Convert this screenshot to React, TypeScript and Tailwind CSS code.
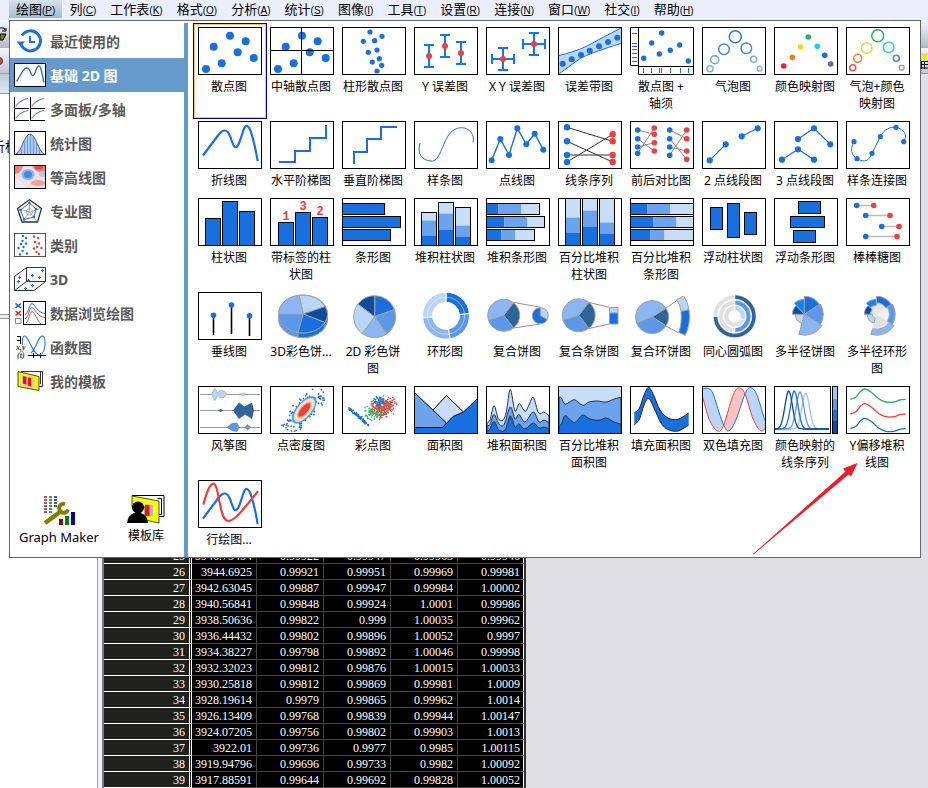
import React from 'react';

type Pt = [number, number];

const BLUE = '#1a6fdf';
const MID = '#6ba3ec';
const PALE = '#c8ddf8';
const RED = '#f03e3e';
const NAVY = '#104a98';
const STEEL = '#2f6499';
const SKY = '#5c97ea';
const SOFT = '#8bb6f1';
const ICE = '#bbd5f7';
const GREEN = '#2fae68';
const GREY = '#9ca3ab';

/* ---------- geometry helpers ---------- */

function smooth(p: Pt[], join = false): string {
  let d = `${join ? 'L' : 'M'}${p[0][0]} ${p[0][1]}`;
  for (let i = 0; i < p.length - 1; i++) {
    const a = p[Math.max(0, i - 1)];
    const b = p[i];
    const c = p[i + 1];
    const e = p[Math.min(p.length - 1, i + 2)];
    d += `C${b[0] + (c[0] - a[0]) / 6} ${b[1] + (c[1] - a[1]) / 6} ${c[0] - (e[0] - b[0]) / 6} ${c[1] - (e[1] - b[1]) / 6} ${c[0]} ${c[1]}`;
  }
  return d;
}

const between = (a: Pt[], b: Pt[]) => smooth(a) + smooth([...b].reverse(), true) + 'Z';

function wedge(cx: number, cy: number, r: number, from: number, to: number, inner = 0): string {
  const at = (rad: number, deg: number) => {
    const t = (deg * Math.PI) / 180;
    return `${(cx + rad * Math.sin(t)).toFixed(2)} ${(cy - rad * Math.cos(t)).toFixed(2)}`;
  };
  const big = to - from > 180 ? 1 : 0;
  if (!inner) return `M${cx} ${cy}L${at(r, from)}A${r} ${r} 0 ${big} 1 ${at(r, to)}Z`;
  return `M${at(r, from)}A${r} ${r} 0 ${big} 1 ${at(r, to)}L${at(inner, to)}A${inner} ${inner} 0 ${big} 0 ${at(inner, from)}Z`;
}

function cloud(n: number, cx: number, cy: number, sx: number, sy: number, deg: number, seed: number): Pt[] {
  let s = seed * 7919 + 104729;
  const rnd = () => {
    s = (s * 16807) % 2147483647;
    return s / 2147483647;
  };
  const t = (deg * Math.PI) / 180;
  const out: Pt[] = [];
  for (let i = 0; i < n; i++) {
    const u = (rnd() + rnd() + rnd() - 1.5) * 2 * sx;
    const v = (rnd() + rnd() + rnd() - 1.5) * 2 * sy;
    out.push([cx + u * Math.cos(t) - v * Math.sin(t), cy + u * Math.sin(t) + v * Math.cos(t)]);
  }
  return out;
}

/* ---------- drawing parts ---------- */

const Frame = () => <rect x=".5" y=".5" width="63" height="47" fill="none" stroke="#000" />;

const Dots = ({ p, r = 3, fill = BLUE }: { p: Pt[]; r?: number; fill?: string }) => (
  <g fill={fill}>
    {p.map(([x, y], i) => (
      <circle key={i} cx={x} cy={y} r={r} />
    ))}
  </g>
);

const Curve = ({ p, c = BLUE, w = 1 }: { p: Pt[]; c?: string; w?: number }) => (
  <path d={smooth(p)} fill="none" stroke={c} strokeWidth={w} />
);

const Poly = ({ p, c = BLUE, w = 1 }: { p: Pt[]; c?: string; w?: number }) => (
  <polyline points={p.join(' ')} fill="none" stroke={c} strokeWidth={w} />
);

type Box = [number, number, number, number, string?];
const Boxes = ({ b, stroke = '#000' }: { b: Box[]; stroke?: string }) => (
  <g stroke={stroke}>
    {b.map(([x0, y0, x1, y1, f], i) => (
      <rect key={i} x={x0 + 0.5} y={y0 + 0.5} width={x1 - x0 - 1} height={y1 - y0 - 1} fill={f ?? BLUE} />
    ))}
  </g>
);

type Slice = [number, number, number, string, number?];
const Slices = ({ cx, cy, s, stroke = GREY, w = 1 }: { cx: number; cy: number; s: Slice[]; stroke?: string; w?: number }) => (
  <g stroke={stroke} strokeWidth={w}>
    {s.map(([r, a, b, f, inner], i) => (
      <path key={i} d={wedge(cx, cy, r, a, b, inner)} fill={f} />
    ))}
  </g>
);

const Rings = ({ p }: { p: [number, number, number, string][] }) => (
  <g fill="none" strokeWidth="1.5">
    {p.map(([x, y, r, c], i) => (
      <circle key={i} cx={x} cy={y} r={r} stroke={c} />
    ))}
  </g>
);

const scatter: Pt[] = [[8, 42], [15.7, 19.7], [23.7, 36.3], [32, 8.7], [39.7, 25.3], [47.7, 14.3], [55.7, 31]];
const linePath = 'M5 34.5L20 14.5C25 8 29 7.500 32 15L34.500 22Q37.700 31 41.500 21L45.500 9Q49 0 53 11Q57 24 59.700 40';
const zigzag: Pt[] = [[5.7, 39.3], [14.3, 18], [23, 34], [31.3, 7.3], [40.3, 23.3], [48.7, 12.7], [57.3, 28.7]];

const blueWave: Pt[] = [[1, 3], [5.7, 2.3], [10.7, 7], [17.3, 27], [21.7, 39], [26.7, 45], [34, 33.7], [43, 8], [48, 1.7], [54, 7], [60.7, 27], [63, 35]];
const redWave: Pt[] = [[1, 12], [7.3, 33.7], [15.7, 45], [21.7, 39], [30.7, 10.3], [36.7, 2], [43, 8], [50.7, 32], [58, 44.3], [63, 43]];

const stackTop: Pt[] = [[1, 37], [4, 34], [8, 19.7], [12.3, 32.7], [17, 34], [20.5, 25], [24.3, 3.5], [29, 25], [33.3, 17.7], [39, 25.3], [43, 19], [47.3, 11.5], [52.7, 27], [58, 26], [63, 30]];
const stackMid: Pt[] = [[1, 40], [4, 38.5], [8, 28.5], [13, 38], [18, 38.5], [24.3, 21], [29, 33], [33, 28.5], [39, 36], [47.3, 26], [53, 36], [58, 34], [63, 37]];
const stackLow: Pt[] = [[1, 45], [4, 43], [8, 35.5], [13, 44], [19, 44], [24.3, 30], [29, 41], [33, 38], [39, 43], [47.3, 37], [53, 42], [58, 41], [63, 43]];
const pctTop: Pt[] = [[1, 11], [3.5, 12], [7.3, 18.3], [16.3, 13.7], [24.7, 19.3], [31, 16], [39, 15], [48, 16], [56.3, 13], [63, 11.3]];
const pctLow: Pt[] = [[1, 40.5], [3.5, 38], [7.3, 29.7], [16.3, 36.5], [24.7, 29], [31.3, 32.7], [41, 34.3], [48, 32], [56, 36], [63, 38]];
const fillTop: Pt[] = [[4.3, 27], [9.5, 22], [14, 9], [18.7, 1.5], [24, 10], [30, 24], [38, 32], [48, 33.3], [58.7, 27]];
const fillLow: Pt[] = [[4.3, 39], [9.5, 33], [14, 19], [18.7, 12.5], [24, 22], [31, 37], [38, 43.5], [48, 45], [58.7, 39]];
const offset: Pt[] = [[4.3, 13.3], [10, 11], [14.5, 5.5], [18.7, 3], [25, 6], [33, 13], [40, 16], [48, 16], [54, 14], [59.7, 13.3]];

const shift = (p: Pt[], dy: number): Pt[] => p.map(([x, y]) => [x, y + dy]);
const bell = (m: number, top: number): Pt[] => {
  const out: Pt[] = [];
  for (let x = 1; x <= 56; x += 1.5) out.push([x, 43 - (43 - top) * Math.exp(-((x - m) ** 2) / 28)]);
  return out;
};

const ErrorBars = ({ v, h = [] }: { v: Pt[]; h?: Pt[] }) => (
  <g stroke="#1378ea" strokeWidth="2" fill="none">
    {v.map(([x, y], i) => (
      <path key={i} d={`M${x} ${y - 11}V${y + 11}M${x - 5} ${y - 11}h10M${x - 5} ${y + 11}h10`} />
    ))}
    {h.map(([x, y], i) => (
      <path key={i} d={`M${x - 11} ${y}H${x + 11}M${x - 11} ${y - 5}v10M${x + 11} ${y - 5}v10`} />
    ))}
    {v.map(([x, y], i) => (
      <circle key={i} cx={x} cy={y} r="3" fill={RED} stroke="none" />
    ))}
  </g>
);

const Links = ({ x0, x1, pairs, r }: { x0: number; x1: number; pairs: Pt[]; r: number }) => (
  <g>
    {pairs.map(([a, b], i) => (
      <path key={i} d={`M${x0} ${a}L${x1} ${b}`} stroke={r > 3 ? '#333' : '#888'} />
    ))}
    <Dots r={r} p={pairs.map(([a]) => [x0, a] as Pt)} />
    <Dots r={r} fill={RED} p={pairs.map(([, b]) => [x1, b] as Pt)} />
  </g>
);

/* ---------- gallery ---------- */

type Plot = { name: string[]; art: React.ReactNode; bare?: boolean };

const plots: Plot[] = [
  { name: ['散点图'], art: <Dots p={scatter} r={4} /> },
  { name: ['中轴散点图'], art: <><Dots p={scatter} r={4} /><path d="M31.500 0V48M0 23.500H64" stroke="#000" /></> },
  { name: ['柱形散点图'], art: <Dots r={2.6} p={[[28, 5], [40, 9.3], [21.3, 14.3], [32.7, 13.7], [35, 23], [26.3, 25.3], [37.3, 31.7], [30.3, 35], [39.7, 38.3], [35, 44]]} /> },
  { name: ['Y 误差图'], art: <ErrorBars v={[[15, 29], [31, 19], [47, 26]]} /> },
  { name: ['X Y 误差图'], art: <ErrorBars v={[[17, 32], [48, 17]]} h={[[17, 32], [48, 17]]} /> },
  {
    name: ['误差带图'],
    art: (
      <>
        <path d="M1 28.500C20 24 30 19 40 13L63 1V16.500C45 22 34 26 25 30C15 36 8 42 1 47Z" fill="#bcd6f8" />
        <path d="M1 28.500C20 24 30 19 40 13L63 1M63 16.500C45 22 34 26 25 30C15 36 8 42 1 47" fill="none" stroke={BLUE} />
        <Dots r={3} p={[[4.7, 36.7], [13.7, 32.3], [23, 28], [31.7, 23.7], [41, 19.3], [50, 15], [59.3, 10.7]]} />
      </>
    ),
  },
  {
    name: ['散点图 +', '轴须'],
    bare: true,
    art: (
      <>
        <path d="M.500 .500H63.500V47.500H8.500V.500M.500 .500V38.500M.500 38.500H8.500M8.500 39.500H63.500" fill="none" stroke="#000" />
        <path d="M2 6.500h5M2 16.500h5M2 19.500h5M2 22.500h5M2 26.500h5M2 30.500h5M2 34.500h5M13.500 41v5M21.500 41v5M29.500 41v5M31.500 41v5M40.500 41v5M50.500 41v5M58.500 41v5" stroke={BLUE} />
        <Dots r={2.7} p={[[31.7, 6], [21.7, 16], [49.7, 18], [40.3, 23.3], [29.3, 27], [13.7, 31.3], [58.3, 34]]} />
      </>
    ),
  },
  { name: ['气泡图'], art: <Rings p={[[33.3, 9.7, 6, '#2a76df'], [22, 22.3, 5.3, '#4386e4'], [44.3, 21.3, 5.3, '#4386e4'], [12.7, 32.7, 4, '#6ba3ec'], [51.7, 32.3, 3, '#7eb0f0'], [8, 41.7, 3, '#7eb0f0'], [57.7, 41.7, 2.4, '#8bb6f1']]} /> },
  {
    name: ['颜色映射图'],
    art: (
      <>
        {([[9.7, 39, '#ee2028'], [18.3, 30.3, '#ff7a10'], [26.7, 20, '#e6dc1a'], [34.3, 10, GREEN], [43.3, 19.3, '#18d4dc'], [50.7, 28.3, BLUE], [56.7, 37, '#6c62bd']] as [number, number, string][]).map(([x, y, c]) => (
          <circle key={c} cx={x} cy={y} r="2.800" fill={c} />
        ))}
      </>
    ),
  },
  { name: ['气泡+颜色', '映射图'], art: <Rings p={[[31.7, 8.7, 6, GREEN], [20.7, 21, 5.3, '#e6dc30'], [42.7, 20.3, 5.3, '#28d4dc'], [11.7, 31.3, 4, '#ff7a28'], [50.3, 31.3, 3, '#4a8ae6'], [6.7, 40.7, 3, '#ee5058'], [55.7, 40.7, 2.4, '#a898d8']]} /> },

  { name: ['折线图'], art: <path d={linePath} fill="none" stroke={BLUE} strokeWidth="2.200" /> },
  { name: ['水平阶梯图'], art: <Poly w={2} p={[[9, 41], [25, 41], [25, 30], [40, 30], [40, 17], [56, 17], [56, 4]]} /> },
  { name: ['垂直阶梯图'], art: <Poly w={2} p={[[12, 43], [12, 31], [25, 31], [25, 18], [39, 18], [39, 6], [55, 6]]} /> },
  { name: ['样条图'], art: <path d="M6 22C3 33 8 39.500 17 40C25 41 27 27 34 15C38 9 42 7 47.500 6.700C56 7 61 14 59 21.300" fill="none" stroke={BLUE} /> },
  { name: ['点线图'], art: <><Poly w={1.4} p={zigzag} /><Dots p={zigzag} r={3} /></> },
  { name: ['线条序列'], art: <Links x0={9} x1={54.7} r={3.2} pairs={[[6.3, 20.3], [20.3, 41], [34, 34], [41, 13.3]]} /> },
  {
    name: ['前后对比图'],
    art: (
      <>
        <Links x0={7.7} x1={24.3} r={2.8} pairs={[[9, 13.3], [17.7, 30], [26, 21.7], [32.3, 7]]} />
        <Links x0={39.7} x1={56.7} r={2.8} pairs={[[9, 17.7], [17.7, 38.3], [26, 30], [34.3, 9]]} />
      </>
    ),
  },
  { name: ['2 点线段图'], art: <><Poly w={1.2} p={[[7.7, 39.3], [23.7, 23.3]]} /><Poly w={1.2} p={[[39.7, 15.3], [55.7, 7.3]]} /><Dots r={3.1} p={[[7.7, 39.3], [23.7, 23.3], [39.7, 15.3], [55.7, 7.3]]} /></> },
  { name: ['3 点线段图'], art: <><Poly w={1.2} p={[[8, 38.7], [24, 28.3], [40, 38.7]]} /><Poly w={1.2} p={[[24, 18], [40, 7.3], [56.3, 23.3]]} /><Dots r={3.1} p={[[8, 38.7], [24, 28.3], [40, 38.7], [24, 18], [40, 7.3], [56.3, 23.3]]} /></> },
  {
    name: ['样条连接图'],
    art: (
      <>
        <path d="M8 20.700C4 28 5 34 11 37.700C19 42 23 40 26 32.300L34.300 15.700C38 8 44 6 50 6.300C58 8 62 14 57.700 20.700" fill="none" stroke={BLUE} />
        <Dots r={2.6} p={[[8, 20.7], [11, 37.7], [26, 32.3], [34.3, 15.7], [50, 6.3], [57.7, 20.7]]} />
      </>
    ),
  },

  { name: ['柱状图'], art: <Boxes b={[[7, 20, 23, 48], [24, 3, 40, 48], [41, 13, 57, 48]]} /> },
  {
    name: ['带标签的柱', '状图'],
    art: (
      <>
        <Boxes b={[[8, 24, 24, 48], [25, 14, 41, 48], [42, 19, 58, 48]]} />
        <g fill={RED} fontSize="12" fontWeight="bold" textAnchor="middle" fontFamily="Liberation Mono, monospace">
          <text x="16" y="22">1</text>
          <text x="33" y="12">3</text>
          <text x="50" y="17">2</text>
        </g>
      </>
    ),
  },
  { name: ['条形图'], art: <Boxes b={[[0, 5, 43, 17], [0, 18, 59, 30], [0, 31, 49, 43]]} /> },
  {
    name: ['堆积柱状图'],
    art: (
      <>
        <Boxes stroke="none" b={[[7, 14, 23, 23, PALE], [7, 22, 23, 38, MID], [7, 37, 23, 48], [24, 4, 40, 16, PALE], [24, 15, 40, 32, MID], [24, 31, 40, 48], [41, 9, 57, 28, PALE], [41, 27, 57, 39, MID], [41, 38, 57, 48]]} />
        <Boxes b={[[7, 14, 23, 48, 'none'], [24, 4, 40, 48, 'none'], [41, 9, 57, 48, 'none']]} />
      </>
    ),
  },
  {
    name: ['堆积条形图'],
    art: (
      <>
        <Boxes stroke="none" b={[[0, 5, 13, 17], [12, 5, 36, 17, MID], [35, 5, 54, 17, PALE], [0, 18, 19, 30], [18, 18, 42, 30, MID], [41, 18, 59, 30, PALE], [0, 31, 16, 43], [15, 31, 30, 43, MID], [29, 31, 49, 43, PALE]]} />
        <Boxes b={[[0, 5, 54, 17, 'none'], [0, 18, 59, 30, 'none'], [0, 31, 49, 43, 'none']]} />
      </>
    ),
  },
  {
    name: ['百分比堆积', '柱状图'],
    art: (
      <>
        <Boxes stroke="none" b={[[7, 0, 23, 20, PALE], [7, 19, 23, 35, MID], [7, 34, 23, 48], [24, 0, 40, 13, PALE], [24, 12, 40, 29, MID], [24, 28, 40, 48], [41, 0, 57, 25, PALE], [41, 24, 57, 36, MID], [41, 35, 57, 48]]} />
        <Boxes b={[[7, 0, 23, 48, 'none'], [24, 0, 40, 48, 'none'], [41, 0, 57, 48, 'none']]} />
      </>
    ),
  },
  {
    name: ['百分比堆积', '条形图'],
    art: (
      <>
        <Boxes stroke="none" b={[[0, 5, 18, 17], [17, 5, 41, 17, MID], [40, 5, 64, 17, PALE], [0, 18, 24, 30], [23, 18, 47, 30, MID], [46, 18, 64, 30, PALE], [0, 31, 21, 43], [20, 31, 35, 43, MID], [34, 31, 64, 43, PALE]]} />
        <Boxes b={[[0, 5, 64, 17, 'none'], [0, 18, 64, 30, 'none'], [0, 31, 64, 43, 'none']]} />
      </>
    ),
  },
  { name: ['浮动柱状图'], art: <Boxes b={[[8, 9, 21, 32], [25, 5, 38, 40], [42, 14, 55, 37]]} /> },
  { name: ['浮动条形图'], art: <Boxes b={[[24, 3, 47, 16], [16, 18, 51, 30], [19, 32, 42, 45]]} /> },
  {
    name: ['棒棒糖图'],
    art: (
      <>
        <path d="M11 7.500H28M20 17.500H44M36 28.500H53M20 38.500H51" stroke="#bcbcbc" strokeWidth="1.600" />
        <Dots r={2.8} p={[[10.7, 7.5], [19.7, 17.5], [35.7, 28.5], [19.7, 38.5]]} />
        <Dots r={2.8} fill={RED} p={[[27.7, 7.5], [44, 17.5], [53, 28.5], [51, 38.5]]} />
      </>
    ),
  },

  { name: ['垂线图'], art: <><path d="M15.500 23V43M33.500 13V42M51.500 24V44" stroke="#000" strokeWidth="1.600" /><Dots r={2.8} p={[[15.5, 23.3], [33.5, 13], [51.5, 23.7]]} /></> },
  {
    name: ['3D彩色饼...'],
    bare: true,
    art: (
      <>
        <path d="M8.500 22V27A24.500 18.500 0 0 0 57.500 27V22Z" fill={SKY} stroke={GREY} />
        <path d="M28 40.500V45.300A24.500 18.500 0 0 0 57.500 27V22Z" fill={BLUE} stroke={GREY} />
        <path d="M54 30.500V35Q57.500 31 57.500 27V22Z" fill={NAVY} stroke={GREY} />
        <ellipse cx="33" cy="22" rx="24.500" ry="19" fill={SKY} stroke={GREY} />
        <path d="M33.300 22L29 3.200A24.500 19 0 0 1 55 14.500Z" fill={ICE} stroke={GREY} />
        <path d="M33.300 22L55 14.500Q60 22 55 30.500Z" fill={NAVY} stroke={GREY} />
        <path d="M33.300 22L55 30.500A24.500 19 0 0 1 28 40.700Z" fill={BLUE} stroke={GREY} />
        <path d="M33.300 22L8.500 22A24.500 19 0 0 1 29 3.200Z" fill={SOFT} stroke={GREY} />
      </>
    ),
  },
  { name: ['2D 彩色饼', '图'], bare: true, art: <Slices cx={32.7} cy={24.7} s={[[21, 0, 70, BLUE], [21, 70, 145, SKY], [21, 145, 217, SOFT], [21, 217, 307, ICE], [21, 307, 360, NAVY]]} /> },
  {
    name: ['环形图'],
    bare: true,
    art: (
      <>
        <Slices cx={32} cy={23.7} stroke="#fff" s={[[23.5, 0, 85, BLUE, 13.5], [23.5, 85, 170, SKY, 13.5], [23.5, 170, 265, SOFT, 13.5], [23.5, 265, 360, ICE, 13.5]]} />
        <circle cx="32" cy="23.700" r="18.500" fill="none" stroke="#fff" strokeOpacity=".6" strokeWidth=".8" />
      </>
    ),
  },
  {
    name: ['复合饼图'],
    bare: true,
    art: (
      <>
        <path d="M28 10.500L54.700 15.200M28 36L54 32" stroke="#777" strokeWidth=".8" />
        <Slices cx={17.7} cy={23.3} s={[[16, 38, 142, STEEL], [16, 142, 253, SKY], [16, 253, 398, SOFT]]} />
        <Slices cx={54.3} cy={23.7} s={[[8, 0, 120, ICE], [8, 120, 360, BLUE]]} />
      </>
    ),
  },
  {
    name: ['复合条饼图'],
    bare: true,
    art: (
      <>
        <path d="M31 10.500L51 15.200M31 36.500L51 32" stroke="#777" strokeWidth=".8" />
        <Slices cx={20.7} cy={23.3} s={[[16.5, 38, 142, STEEL], [16.5, 142, 253, SKY], [16.5, 253, 398, SOFT]]} />
        <path d="M51.500 15.500H60V21H51.500Z" fill={ICE} stroke={GREY} />
        <path d="M51.500 21H60V32H51.500Z" fill={BLUE} stroke={GREY} />
      </>
    ),
  },
  {
    name: ['复合环饼图'],
    bare: true,
    art: (
      <>
        <path d="M36 16L47.300 8.300M36 34L48.700 41" stroke="#777" strokeWidth=".8" />
        <Slices cx={22} cy={25} s={[[16.5, 58, 122, STEEL], [16.5, 122, 248, SKY], [16.5, 248, 418, SOFT]]} />
        <path d="M46.700 7.700L53.700 4Q58 10 59 17.700L51 19.500Q50.500 13 46.700 7.700Z" fill={ICE} stroke={GREY} />
        <path d="M51 19.500L59 17.700Q61 31 55.300 43.300L48.700 40.300Q52 32 51 19.500Z" fill={BLUE} stroke={GREY} />
      </>
    ),
  },
  {
    name: ['同心圆弧图'],
    bare: true,
    art: (
      <Slices cx={32.7} cy={24.3} stroke="#fff" w={0.7} s={[[21.5, 0, 270, STEEL, 17], [21.5, 270, 360, '#e0e0e0', 17], [16.3, 0, 180, SKY, 11.5], [16.3, 180, 360, '#e0e0e0', 11.5], [10.8, 0, 110, ICE, 6], [10.8, 110, 360, '#e0e0e0', 6]]} />
    ),
  },
  { name: ['多半径饼图'], bare: true, art: <Slices cx={30.3} cy={22.3} s={[[18, 0, 57, BLUE], [19, 57, 122, SKY], [21, 122, 195, SOFT], [9, 195, 270, ICE], [12, 270, 318, NAVY], [15, 318, 360, '#0a84ff']]} /> },
  {
    name: ['多半径环形', '图'],
    bare: true,
    art: (
      <>
        <Slices cx={30.3} cy={22.3} stroke="#ececec" s={[[12, 0, 57, '#e4e4e4'], [13, 57, 122, '#f0f0f0'], [14, 122, 195, '#e0e0e0'], [5, 195, 270, '#eee'], [7, 270, 318, '#e0e0e0'], [9, 318, 360, '#e8e8e8']]} />
        <Slices cx={30.3} cy={22.3} s={[[18, 0, 57, BLUE, 11.5], [19, 57, 122, SKY, 13], [21, 122, 195, SOFT, 15], [9, 195, 270, ICE, 4], [12, 270, 318, NAVY, 6], [15, 318, 360, '#0a84ff', 9]]} />
      </>
    ),
  },

  {
    name: ['风筝图'],
    art: (
      <>
        <path d="M2 8.500H62M2 24.500H62M2 41.500H62" stroke="#999" />
        <path d="M13.500 8.300L16.700 2.500L19.700 7L22 4.500L26 5L29 8.300L26 11.500L22 12L19.700 9.500L16.700 14.500ZM41 8.300L45 7.200L49 8.300L45 9.500Z" fill={ICE} stroke="#7c9cc4" strokeWidth=".6" />
        <path d="M20 24.500L22.700 23L25 24.500L22.700 26ZM35 24.500L41 16.500L46.500 20.500L54 16.500L56 24.500L54 33L47 28.500L41 33Z" fill={STEEL} />
        <path d="M29 41.200L34 37.500L39 37L41 41.200L39 45.500L34 44.500ZM47 41.200L49.500 38.500L52.500 41.200L49.500 44Z" fill={SKY} stroke="#4a78b8" strokeWidth=".6" />
      </>
    ),
  },
  {
    name: ['点密度图'],
    art: (
      <>
        <Dots r={0.9} p={cloud(260, 34.5, 24, 11, 4.6, -48, 77).filter(([x, y]) => x > 2 && x < 62 && y > 2 && y < 46)} />
        <g transform="rotate(-50 34.300 24)">
          <ellipse cx="34.300" cy="24" rx="16.500" ry="8" fill="#5b95e4" />
          <ellipse cx="34.300" cy="24" rx="14.500" ry="6.800" fill="#cfe4e4" />
          <ellipse cx="34.300" cy="24" rx="12.500" ry="5.700" fill="#fbe9be" />
          <ellipse cx="34.300" cy="24" rx="10.500" ry="4.500" fill="#f6a98b" />
          <ellipse cx="34.300" cy="24" rx="8.500" ry="3.300" fill={RED} />
        </g>
      </>
    ),
  },
  {
    name: ['彩点图'],
    art: (
      <>
        <Dots r={0.8} p={cloud(90, 17, 31, 7, 0.7, 41, 5)} />
        <Dots r={0.8} fill={GREEN} p={cloud(110, 33, 26, 5, 3.5, -8, 12)} />
        <Dots r={0.8} fill={RED} p={cloud(190, 42, 21, 5.5, 4, -15, 31)} />
        <Dots r={0.8} p={cloud(50, 36.5, 15.5, 2.8, 2.2, 0, 83)} />
        <Dots r={0.8} fill={GREEN} p={cloud(25, 42, 20, 6, 5, 20, 44)} />
      </>
    ),
  },
  {
    name: ['面积图'],
    art: (
      <g stroke="#000">
        <path d="M18.500 24.500L32.500 9.500L49.500 26L32.500 37.500Z" fill={PALE} />
        <path d="M.500 6.500L32.500 37L28.500 41.500H.500Z" fill={MID} />
        <path d="M.500 41.500H28.500L39 30.500L49.500 26L63.500 12.500V47.500H.500Z" fill={BLUE} />
      </g>
    ),
  },
  {
    name: ['堆积面积图'],
    art: (
      <g stroke="#1c2f4a" strokeWidth="1">
        <path d={smooth(stackTop) + 'V48H1Z'} fill={PALE} />
        <path d={smooth(stackMid) + 'V48H1Z'} fill={MID} />
        <path d={smooth(stackLow) + 'V48H1Z'} fill={BLUE} />
      </g>
    ),
  },
  {
    name: ['百分比堆积', '面积图'],
    art: (
      <g stroke="#1c2f4a" strokeWidth="1">
        <path d="M0 0H64V48H0Z" fill={PALE} />
        <path d={smooth(pctTop) + 'V48H1Z'} fill={MID} />
        <path d={smooth(pctLow) + 'V48H1Z'} fill={BLUE} />
      </g>
    ),
  },
  { name: ['填充面积图'], art: <><path d={between(fillTop, fillLow)} fill={BLUE} /><Curve p={fillTop} c="#222" /><Curve p={fillLow} c="#222" /></> },
  {
    name: ['双色填充图'],
    art: (
      <>
        <path d={between(blueWave.slice(0, 5), redWave.slice(0, 4))} fill={ICE} />
        <path d={between(blueWave.slice(4, 8), redWave.slice(3, 7))} fill="#fac4c4" />
        <path d={between(blueWave.slice(7), redWave.slice(6))} fill={ICE} />
        <Curve p={redWave} c={RED} />
        <Curve p={blueWave} c={BLUE} />
      </>
    ),
  },
  {
    name: ['颜色映射的', '线条序列'],
    bare: true,
    art: (
      <>
        <Curve p={bell(31.7, 7)} c="#99c6fb" w={1.3} />
        <Curve p={bell(26, 6)} c={SKY} w={1.3} />
        <Curve p={bell(20.3, 5)} c={BLUE} w={1.3} />
        <Curve p={bell(14.7, 5)} c={NAVY} w={1.3} />
        <rect x=".5" y=".5" width="56" height="47" fill="none" stroke="#000" />
        <rect x="59" y="1" width="4" height="12" fill="#99c6fb" />
        <rect x="59" y="13" width="4" height="11" fill={SKY} />
        <rect x="59" y="24" width="4" height="11" fill={BLUE} />
        <rect x="59" y="35" width="4" height="12" fill={NAVY} />
        <rect x="58.500" y=".5" width="5" height="47" fill="none" stroke="#000" />
      </>
    ),
  },
  { name: ['Y偏移堆积', '线图'], art: <><Curve p={offset} c={GREEN} w={1.3} /><Curve p={shift(offset, 14.7)} c={RED} w={1.3} /><Curve p={shift(offset, 29.3)} w={1.3} /></> },

  {
    name: ['行绘图...'],
    art: (
      <>
        <path d={linePath} transform="translate(0 4)" fill="none" stroke={BLUE} strokeWidth="2.200" />
        <Curve c={RED} w={2.2} p={[[5.3, 24.7], [10, 10], [15, 3.7], [18.5, 8], [21.5, 22], [25, 35.5], [30, 41], [38, 37], [48, 26], [60, 11.3]]} />
      </>
    ),
  },
];

/* ---------- category list ---------- */

const Mini = () => <rect x=".5" y=".5" width="31" height="23" fill="#fff" stroke="#000" />;

const categories: { name: string; art: React.ReactNode }[] = [
  {
    name: '最近使用的',
    art: (
      <>
        <path d="M6.700 14A10 10 0 1 0 8 6.500" fill="none" stroke={BLUE} strokeWidth="3" />
        <path d="M2.500 12.500H11L6.800 17.500Z" fill={BLUE} />
        <path d="M16 7V13H21" fill="none" stroke={BLUE} strokeWidth="2" />
      </>
    ),
  },
  { name: '基础 2D 图', art: <><Mini /><path d="M2.500 18.500L9 8Q12.500 2.500 15.500 7L17.500 11.500Q19 14.500 21 10L23 4.500Q25 .500 27 6L30 19.500" fill="none" stroke="#2a66c0" strokeWidth="1.300" /></> },
  {
    name: '多面板/多轴',
    art: (
      <>
        {[0, 16].map((x) => [0, 12].map((y) => (
          <g key={`${x}-${y}`} fill="none">
            <path d={`M${x + 1.5} ${y + 9.5}Q${x + 6} ${y + 3} ${x + 14} ${y + 1.5}`} stroke="#5e8cd0" strokeWidth="1.200" />
            <path d={`M${x + 0.5} ${y}V${y + 11.5}H${x + 15}`} stroke="#000" />
          </g>
        )))}
      </>
    ),
  },
  {
    name: '统计图',
    art: (
      <>
        <Mini />
        <path d="M2 23C8 20 10 3.500 16 3C22 3.500 24 20 30 23Z" fill="#aac8f3" />
        <path d="M7.500 18V23M10.500 11V23M13.500 5V23M16.500 3V23M19.500 6V23M22.500 12V23M25.500 19V23" stroke="#6c9fe6" />
        <path d="M2 23C8 20 10 3.500 16 3C22 3.500 24 20 30 23" fill="none" stroke="#555" strokeWidth=".9" />
      </>
    ),
  },
  {
    name: '等高线图',
    art: (
      <>
        <rect x="1" y="1" width="30" height="22" fill="#f8dcdc" />
        <path d="M1 1H9Q7 8 1 9ZM18 1H31V7Q22 9 18 1Z" fill="#ee8080" />
        <ellipse cx="25" cy="2.500" rx="4" ry="2" fill="#e24848" />
        <ellipse cx="14" cy="10" rx="8.500" ry="7.500" fill="#dbe7f8" />
        <ellipse cx="14" cy="9.500" rx="6.500" ry="5.500" fill="#8db4ee" />
        <ellipse cx="14" cy="9.500" rx="4" ry="3.500" fill="#4a86dc" />
        <ellipse cx="29" cy="9" rx="4" ry="3" fill="#aac8f3" />
        <ellipse cx="24" cy="18" rx="7" ry="3" fill="#f0a0a0" />
        <path d="M1 13Q8 17 12 23H1Z" fill="#e8eef8" />
        <rect x=".5" y=".5" width="31" height="23" fill="none" stroke="#000" />
      </>
    ),
  },
  {
    name: '专业图',
    art: (
      <>
        <path d="M15.500 .800L27.500 9.500L23.500 23H8L3.500 9.500Z" fill="none" stroke="#333" strokeWidth="1.300" />
        <path d="M15.500 1V13L27 9.500M15.500 13L23 22.500M15.500 13L8.500 22.500M15.500 13L4 9.500M15.500 9L19 12L17.500 16H13.500L12 12Z" fill="none" stroke="#999" strokeWidth=".8" />
        <path d="M15.500 4L22 10L20 18L10 20.500L6.500 11Z" fill="none" stroke="#2a6fd0" />
        <Dots r={1.3} p={[[15.5, 4], [22, 10], [20, 18], [10, 20.5], [6.5, 11]]} />
      </>
    ),
  },
  {
    name: '类别',
    art: (
      <>
        <rect x=".5" y=".5" width="31" height="23" fill="#fff" stroke="#555" />
        <Dots r={1.2} p={[[9, 3], [12, 5], [8.5, 8], [7, 11], [12, 10.5], [4.5, 15], [9.5, 14], [8.5, 18], [6, 21.5], [13, 20.5]]} />
        <Dots r={1.2} fill={RED} p={[[20, 3.5], [24, 5], [21, 9], [25, 10.5], [20, 15.5], [23, 14], [27.5, 15], [22.5, 19], [25, 21]]} />
      </>
    ),
  },
  {
    name: '3D',
    art: (
      <>
        <path d="M12.500 .500H31.500V14.500L20 23.500H.500V9.500L12.500 .500V14.500H31.500M12.500 14.500L.500 23.500" fill="none" stroke="#333" />
        <path d="M27 3.500h3M28.500 2v3M4 10.500h3M5.500 9v3M3 14.500h3M4.500 13v3M17 8.500h3M18.500 7v3M24 10.500h3M25.500 9v3M13 13.500h3M14.500 12v3M17 18.500h3M18.500 17v3M10 21.500h3M11.500 20v3" stroke={BLUE} />
      </>
    ),
  },
  {
    name: '数据浏览绘图',
    art: (
      <>
        <path d="M1.500 2.500L7 7M7 2.500L1.500 7" stroke="#1858b0" strokeWidth="1.600" />
        <path d="M1.500 10L7 14.500M7 10L1.500 14.500" stroke="#d82020" strokeWidth="1.600" />
        <path d="M1.500 17.500H7V22.500H1.500Z" fill="none" stroke="#888" />
        <rect x="9.500" y=".5" width="22" height="23" fill="#fff" stroke="#000" />
        <path d="M11 13.500C15 12 15 3 18 2.500C21 3 23 12 31 12.500" fill="none" stroke={BLUE} />
        <path d="M11 18C15 16 15 7 18 6.500C21 7 23 16 31 16.500" fill="none" stroke={RED} />
        <path d="M12 22C15 20 15.500 11 18 10.500C21 11 23 20 27 23" fill="none" stroke="#777" />
      </>
    ),
  },
  {
    name: '函数图',
    art: (
      <>
        <path d="M3 1.500H6.500V9M3 5.500H6.500M14 20.500H32M19.500 18V23M26.500 18V23" fill="none" stroke="#000" />
        <path d="M8.500 10C8 3 9 .500 11 1C16 4 19 21 26 20C32 18 32 3 29 1C24 0 23 13 17 18" fill="none" stroke="#2a78dc" strokeWidth="1.100" />
        <g fontFamily="Liberation Serif, serif" fontStyle="italic" fontSize="8" fill="#333">
          <text x="2" y="15">x,y</text>
          <text x="3" y="23">(t)</text>
        </g>
      </>
    ),
  },
  {
    name: '我的模板',
    art: (
      <>
        <path d="M7 2.500H28.500V17.500H24M7 2.500H26.500V15" fill="none" stroke="#333" />
        <path d="M4 2.500L25 7.500V21.500L4 17.500Z" fill="#f8f000" stroke="#222" strokeWidth=".8" />
        <path d="M8 6L20 9V18.500L8 16Z" fill="#c8c8c8" />
        <path d="M9 7L12.500 8V15.500L9 14.800ZM14 8.500L17 9V17.500L14 16.800Z" fill="#ee1010" />
      </>
    ),
  },
];

const menus: [string, string][] = [
  ['绘图', 'P'], ['列', 'C'], ['工作表', 'K'], ['格式', 'O'], ['分析', 'A'], ['统计', 'S'], ['图像', 'I'],
  ['工具', 'T'], ['设置', 'R'], ['连接', 'N'], ['窗口', 'W'], ['社交', 'I'], ['帮助', 'H'],
];

const rows: string[][] = [
  ['25', '3946.75454', '0.99922', '0.99947', '0.99963', '0.99946'],
  ['26', '3944.6925', '0.99921', '0.99951', '0.99969', '0.99981'],
  ['27', '3942.63045', '0.99887', '0.99947', '0.99984', '1.00002'],
  ['28', '3940.56841', '0.99848', '0.99924', '1.0001', '0.99986'],
  ['29', '3938.50636', '0.99822', '0.999', '1.00035', '0.99962'],
  ['30', '3936.44432', '0.99802', '0.99896', '1.00052', '0.9997'],
  ['31', '3934.38227', '0.99798', '0.99892', '1.00046', '0.99998'],
  ['32', '3932.32023', '0.99812', '0.99876', '1.00015', '1.00033'],
  ['33', '3930.25818', '0.99812', '0.99869', '0.99981', '1.0009'],
  ['34', '3928.19614', '0.9979', '0.99865', '0.99962', '1.0014'],
  ['35', '3926.13409', '0.99768', '0.99839', '0.99944', '1.00147'],
  ['36', '3924.07205', '0.99756', '0.99802', '0.99903', '1.0013'],
  ['37', '3922.01', '0.99736', '0.9977', '0.9985', '1.00115'],
  ['38', '3919.94796', '0.99696', '0.99733', '0.9982', '1.00092'],
  ['39', '3917.88591', '0.99644', '0.99692', '0.99828', '1.00052'],
];

function MenuBar() {
  return (
    <nav className="flex h-5 bg-[#ebeffb] pl-[9px] text-[13px] leading-[18px]">
      {menus.map(([label, key], i) => (
        <button
          key={label}
          className={`flex h-[18px] shrink-0 items-baseline px-[7px] whitespace-nowrap ${i === 0 ? 'bg-linear-to-b from-[#d5e2ec] to-[#9fbdd2]' : ''}`}
        >
          {label}
          <span className="font-['Liberation_Sans',sans-serif] text-[10px]">
            (<u>{key}</u>)
          </span>
        </button>
      ))}
    </nav>
  );
}

function Sidebar() {
  return (
    <div className="flex w-[174px] shrink-0 flex-col pt-[3px]">
      {categories.map((c, i) => (
        <button
          key={c.name}
          className={`flex h-[34px] items-center gap-1 pl-1 text-left text-sm font-bold ${i === 1 ? 'bg-[#6699cc] text-white' : 'text-[#5a5a5a]'}`}
        >
          <svg width="32" height="24" viewBox="0 0 32 24" aria-hidden="true">{c.art}</svg>
          <span className="pt-[2px]">{c.name}</span>
        </button>
      ))}
      <div className="mt-auto flex items-start pb-[10px]">
        <button className="flex w-[98px] flex-col items-center text-[13px] leading-5">
          <svg width="32" height="32" viewBox="0 0 32 32" aria-hidden="true">
            <g strokeDasharray="2 1" strokeWidth="3">
              <path d="M2.500 1V18" stroke="#b05060" />
              <path d="M7.500 1V18" stroke="#40a050" />
              <path d="M12.500 1V12" stroke="#5050b0" />
            </g>
            <path d="M2 28L17 17" stroke="#808000" strokeWidth="4.500" />
            <path d="M22 9A4.500 4.500 0 1 0 25 14.500" fill="none" stroke="#808000" strokeWidth="4" />
            <rect x="16" y="24" width="4" height="6" fill="#900010" />
            <rect x="22" y="21" width="4" height="9" fill="#008000" />
            <rect x="28" y="17" width="4" height="13" fill="#000090" />
          </svg>
          Graph Maker
        </button>
        <button className="flex flex-1 flex-col items-center text-xs leading-5">
          <svg width="38" height="31" viewBox="0 0 38 31" aria-hidden="true">
            <path d="M5 .500H37V21.500H30M30.500 3.500H34.500V19.500H31" fill="#fff" stroke="#000" />
            <path d="M5 1L32 6V28L18 25V12H5Z" fill="#ffff00" stroke="#000" strokeWidth=".7" />
            <path d="M18 9L26 10V21H18Z" fill="#b8b8b8" />
            <path d="M18 10H22.500V21H18Z" fill="#f01010" />
            <circle cx="11" cy="12.500" r="6" />
            <path d="M0 28Q1 20 7 18H14Q20 20 21 28Z" />
          </svg>
          模板库
        </button>
      </div>
    </div>
  );
}

function PlotMenu() {
  return (
    <div className="absolute top-5 left-[9px] flex border border-[#666] bg-white">
      <Sidebar />
      <div className="mt-[2px] w-1 shrink-0 bg-[#6699cc]" />
      <div className="grid grid-cols-[repeat(10,72px)] px-[6px] py-[3px] text-xs leading-[17px]">
        {plots.map((p, i) => (
          <button
            key={p.name.join('')}
            className={`flex flex-col items-center gap-[3px] pt-[3px] pb-[6px] ${i === 0 ? 'outline outline-[#000080] ring-1 ring-[#ffc078] ring-inset' : ''}`}
          >
            <svg width="64" height="48" viewBox="0 0 64 48" aria-hidden="true">
              {p.art}
              {!p.bare && <Frame />}
            </svg>
            <span className="pr-[2px] whitespace-nowrap">
              {p.name.map((line) => (
                <span key={line} className="block">{line}</span>
              ))}
            </span>
          </button>
        ))}
      </div>
      <svg className="pointer-events-none absolute top-[440px] left-[740px]" width="112" height="96" viewBox="0 0 112 96" aria-hidden="true">
        <path d="M3 93L95.500 10.500L93 7.500L107.500 2L101 15.500L98.500 13.500L3.500 93.500Z" fill="#ee1c24" />
      </svg>
    </div>
  );
}

function Worksheet() {
  return (
    <table className="table-fixed border-separate border-spacing-0 border-r-2 border-[#333] bg-black text-right font-['Liberation_Serif',serif] text-xs leading-[13px] text-white">
      <colgroup>
        <col className="w-[88px]" />
        <col className="w-[65px]" />
        <col className="w-[67px]" />
        <col className="w-[67px]" />
        <col className="w-[67px]" />
        <col className="w-[66px]" />
      </colgroup>
      <tbody>
        {rows.map(([n, ...cells]) => (
          <tr key={n}>
            <th scope="row" className="border-r-[3px] border-b border-r-white border-b-white bg-[#20201c] p-0 pt-[2px] pr-1 font-normal [border-right-style:double]">{n}</th>
            {cells.map((v, i) => (
              <td key={i} className={`border-r border-b border-b-[#444] p-0 pt-[2px] ${i === 4 ? 'border-r-white pr-[3px]' : 'border-r-[#444] pr-1'}`}>{v}</td>
            ))}
          </tr>
        ))}
      </tbody>
    </table>
  );
}

export default function App() {
  return (
    <div className="relative flex min-h-screen flex-col overflow-hidden bg-[#e0dfe4] font-['Noto_Sans','Noto_Sans_CJK_SC',sans-serif] text-black">
      <MenuBar />
      <div className="flex h-7 items-center justify-between border-b border-[#b4b4c4] bg-linear-to-b from-[#f4f5fd] to-[#b9b9cb]">
        <svg width="7" height="16" viewBox="0 0 7 16" aria-hidden="true">
          <path d="M0 2H4L5 4M2 5H6V2" fill="none" stroke="#000" />
          <path d="M0 8H6L3 14H0Z" fill="#808000" stroke="#000" />
        </svg>
      </div>
      <div className="flex h-[26px] items-center justify-between border-b border-[#999] bg-linear-to-b from-[#f4f5fd] to-[#c4c4d4]">
        <svg width="4" height="10" viewBox="0 0 4 10" aria-hidden="true">
          <circle cx="-1" cy="5" r="3.500" fill="#e05028" stroke="#203080" />
        </svg>
        <svg width="7" height="16" viewBox="0 0 7 16" aria-hidden="true">
          <path d="M0 0L7 8M7 0L0 8M3.500 0V8" stroke="#f0e020" strokeWidth="1.500" />
          <path d="M.500 8.500H7M.500 11.500H7M.500 15H7M.500 8V16M3.500 8V16" stroke="#000" />
        </svg>
      </div>
      <div className="flex grow">
        <div className="w-[97px] shrink-0 bg-white">
          <div className="h-5 border-b border-[#999] bg-linear-to-b from-[#b9cbd8] to-[#dfe9f0]" />
          <div className="mt-11 -ml-2 text-[13px] leading-4 whitespace-nowrap">析标</div>
          <div className="mt-40 h-[5px] border-y border-[#999] bg-[#eee]" />
        </div>
        <div className="w-[7px] shrink-0 border-r-2 border-l border-r-[#777] border-l-[#999] bg-[#eef0fc]" />
        <main className="bg-black pt-[474px]">
          <Worksheet />
        </main>
      </div>
      <PlotMenu />
    </div>
  );
}
